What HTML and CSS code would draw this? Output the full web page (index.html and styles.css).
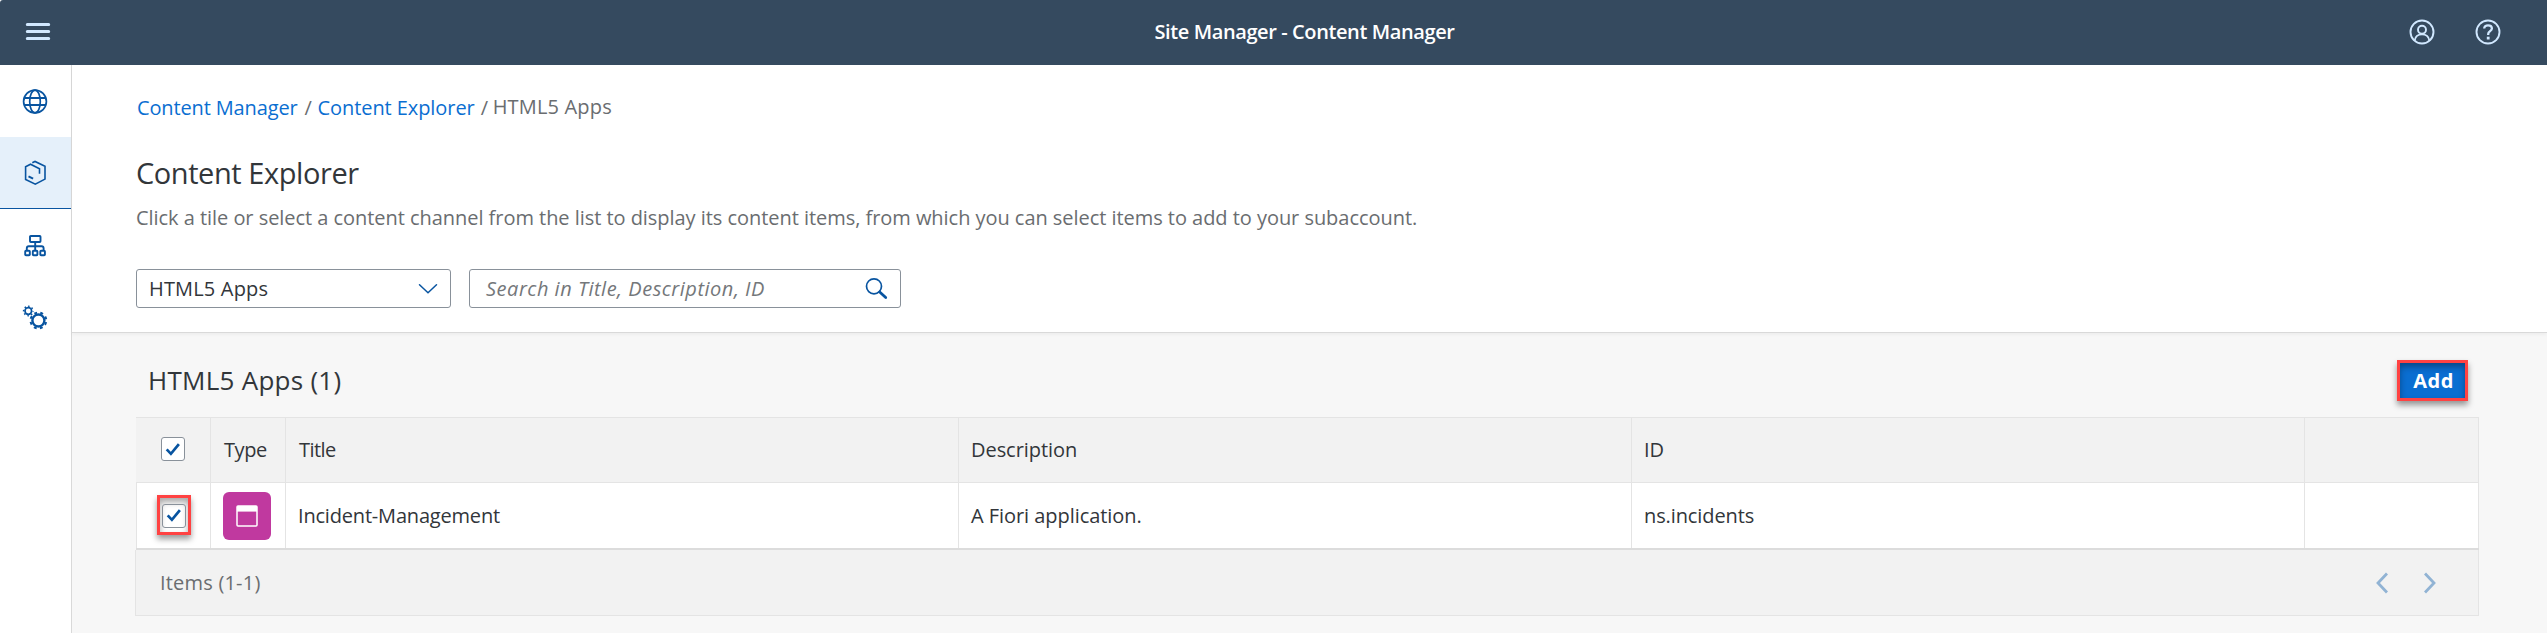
FILE: index.html
```
<!DOCTYPE html>
<html lang="en">
<head>
<meta charset="utf-8">
<title>Site Manager - Content Manager</title>
<link rel="stylesheet" href="styles.css">
</head>
<body>
<header class="shell">
  <button class="shell-btn" aria-label="Menu">
    <svg width="26" height="18" viewBox="0 0 26 18"><path d="M2.300 1.500h21.400M2.300 8.500h21.400M2.300 15.500h21.400" stroke="#d1e8ff" stroke-width="3" stroke-linecap="round"/></svg>
  </button>
  <div class="shell-title">Site Manager - Content Manager</div>
  <div class="shell-actions">
    <svg width="26" height="26" viewBox="0 0 26 26" fill="none" stroke="#d1e8ff" stroke-width="1.900"><circle cx="13" cy="13" r="11.500"/><circle cx="13" cy="10.700" r="4"/><path d="M5.600 21.600c.7-4 3.600-6.200 7.400-6.200s6.700 2.200 7.400 6.200"/></svg>
    <svg width="26" height="26" viewBox="0 0 26 26" fill="none" stroke="#d1e8ff" stroke-width="1.900"><circle cx="13" cy="13" r="11.500"/><path stroke-width="2.300" d="M9.200 9.600c0-2.100 1.600-3.300 3.800-3.300s3.900 1.200 3.900 3.200c0 2.600-3.700 2.700-3.700 5.500v.9"/><path stroke-width="2.800" d="M13.200 17.700v2.800"/></svg>
  </div>
</header>
<div class="body">
  <nav class="side">
    <a class="side-item"><svg width="26" height="26" viewBox="0 0 26 26" fill="none" stroke="#0854a0" stroke-width="1.700"><circle cx="13" cy="13.500" r="11.400"/><ellipse cx="13" cy="13.500" rx="5.300" ry="11.400"/><path d="M2 10h22M2 17h22" stroke-width="2"/></svg></a>
    <a class="side-item active"><svg width="26" height="26" viewBox="0 0 26 26" fill="none" stroke="#0854a0" stroke-width="1.600"><path d="M10.300 2.700l2.700-1.200 10 4.700v12.900l-9.700 5.100-9.700-4.800V6.800l4.900-2.600 9 4.600v5"/><path d="M6.500 16.400l4.600 2.300" stroke-width="2"/></svg></a>
    <a class="side-item"><svg width="26" height="26" viewBox="0 0 26 26" fill="none" stroke="#0854a0" stroke-width="1.900"><rect x="8" y="4" width="10.500" height="6" rx=".8"/><rect x="3.200" y="18.700" width="4.600" height="4.600" rx=".8"/><rect x="10.800" y="18.700" width="4.600" height="4.600" rx=".8"/><rect x="18.300" y="18.700" width="4.600" height="4.600" rx=".8"/><path d="M13.200 10v8.500M4.800 18.500v-2.200q0-2 2-2h12.800q2 0 2 2v2.200"/></svg></a>
    <a class="side-item"><svg width="26" height="26" viewBox="0 0 26 26" fill="none" stroke="#0854a0"><circle cx="6.300" cy="7" r="3.300" stroke-width="1.700"/><circle cx="6.300" cy="7" r="4.700" stroke-width="1.500" stroke-dasharray="1.500 2.190" stroke-dashoffset=".75"/><circle cx="16.400" cy="16.500" r="6" stroke-width="2.400"/><circle cx="16.400" cy="16.500" r="7.900" stroke-width="2" stroke-dasharray="2.900 3.304" stroke-dashoffset="-1.700"/></svg></a>
  </nav>
  <main class="main">
    <section class="page-head">
      <div class="crumbs"><a class="crumb-manager">Content Manager</a><span class="sep">/</span><a class="crumb-explorer">Content Explorer</a><span class="sep sep-last">/</span><span class="crumb-current">HTML5 Apps</span></div>
      <h1 class="title">Content Explorer</h1>
      <p class="subtitle">Click a tile or select a content channel from the list to display its content items, from which you can select items to add to your subaccount.</p>
      <div class="filters">
        <div class="select"><span class="select-text">HTML5 Apps</span><svg width="20" height="12" viewBox="0 0 20 12"><path d="M1.500 1.700l8.500 8 8.500-8" fill="none" stroke="#0854a0" stroke-width="1.500" stroke-linecap="round"/></svg></div>
        <div class="search"><span class="search-text">Search in Title, Description, ID</span><svg width="23" height="23" viewBox="0 0 23 23" fill="none" stroke="#0854a0"><circle cx="9" cy="9.300" r="7.500" stroke-width="1.700"/><path d="M14.700 15l6 5.500" stroke-width="2.800" stroke-linecap="round"/></svg></div>
      </div>
    </section>
    <section class="list">
      <div class="toolbar">
        <h2 class="list-title">HTML5 Apps (1)</h2>
        <button class="add mark">Add</button>
      </div>
      <div class="table">
        <div class="row head">
          <div class="cell pick"><span class="check"><svg width="16" height="15" viewBox="0 0 16 15"><path d="M1.700 7.300l4.200 4.500 8-9.700" fill="none" stroke="#0854a0" stroke-width="2.700"/></svg></span></div>
          <div class="cell type type-head">Type</div>
          <div class="cell name">Title</div>
          <div class="cell">Description</div>
          <div class="cell">ID</div>
          <div class="cell"></div>
        </div>
        <div class="row item">
          <div class="cell pick"><span class="mark check-mark"><span class="check"><svg width="16" height="15" viewBox="0 0 16 15"><path d="M1.700 7.300l4.200 4.500 8-9.700" fill="none" stroke="#0854a0" stroke-width="2.700"/></svg></span></span></div>
          <div class="cell type"><span class="tile"><svg width="22" height="22" viewBox="0 0 22 22"><rect x="1" y="1" width="20" height="20" rx="1" fill="none" stroke="#fff" stroke-width="1.500"/><path d="M1 1h20v5.600H1z" fill="#fff"/></svg></span></div>
          <div class="cell incident">Incident-Management</div>
          <div class="cell">A Fiori application.</div>
          <div class="cell ns">ns.incidents</div>
          <div class="cell"></div>
        </div>
      </div>
      <footer class="pager">
        <span>Items (1-1)</span>
        <div class="arrows">
          <svg width="12" height="22" viewBox="0 0 12 22"><path d="M11 1.500L2 11l9 9.500" fill="none" stroke="#91b3d4" stroke-width="2.800"/></svg>
          <svg width="12" height="22" viewBox="0 0 12 22"><path d="M1 1.500L10 11l-9 9.500" fill="none" stroke="#91b3d4" stroke-width="2.800"/></svg>
        </div>
      </footer>
    </section>
  </main>
</div>
</body>
</html>
```
FILE: styles.css
```
* { box-sizing: border-box; }
body {
  margin: 0;
  height: 633px;
  overflow: hidden;
  background: #fff;
  color: #32363a;
  font: 20px/28px "Open Sans", "Noto Sans", sans-serif;
  letter-spacing: -0.05px;
}
button { font: inherit; border: 0; padding: 0; background: none; }
svg { display: block; flex: none; }

.shell {
  height: 65px;
  display: grid;
  grid-template-columns: 1fr auto 1fr;
  align-items: center;
  background: #354a5f;
  border-top-left-radius: 3px;
  padding: 0 46px 1px 25px;
}
.shell-btn { justify-self: start; }
.shell-title {
  color: #fff;
  font-weight: 600;
  letter-spacing: -0.4px;
  padding: 0 0 1px 83px;
}
.shell-actions { justify-self: end; display: flex; gap: 40px; }

.body { display: flex; height: 568px; }
.side { width: 72px; border-right: 1px solid #d9d9d9; }
.side-item { height: 72px; display: flex; align-items: center; padding-left: 22px; }
.active { background: #e5f0fa; border-bottom: 1px solid #0854a0; }

.main { flex: 1; background: #f7f7f7; }
.page-head {
  height: 268px;
  padding: 29px 64px 0;
  background: #fff;
  border-bottom: 1px solid #d9d9d9;
  box-shadow: 0 2px 3px rgba(0, 0, 0, .04);
}
.crumbs { display: flex; color: #6a6d70; }
.crumbs a { color: #0a6ed1; }
.crumb-manager { padding-left: 1px; letter-spacing: -0.137px; }
.crumb-explorer { letter-spacing: -0.076px; }
.crumb-current { letter-spacing: .17px; margin-top: -1px; }
.sep { width: 20px; padding-left: 7px; }
.sep-last { padding-left: 6px; width: 18px; }
.title {
  margin: 31px 0 0;
  font-size: 29px;
  line-height: 40px;
  font-weight: 400;
  letter-spacing: -0.43px;
}
.subtitle { margin: 11px 0 0; color: #6a6d70; letter-spacing: -0.043px; }
.filters { display: flex; gap: 18px; margin-top: 37px; }
.select, .search {
  height: 39px;
  display: flex;
  align-items: center;
  justify-content: space-between;
  border: 1px solid #89919a;
  border-radius: 3px;
}
.select { width: 315px; padding: 0 12px; letter-spacing: .17px; }
.search { width: 432px; padding: 0 12px 0 16px; }
.search-text { font-style: italic; color: #74777a; letter-spacing: .513px; }

.list { padding: 0 68px 0 63px; }
.toolbar {
  height: 84px;
  padding: 27px 11px 0 13px;
  display: flex;
  justify-content: space-between;
  align-items: flex-start;
}
.list-title { margin: 2px 0 0; font-size: 26px; line-height: 36px; font-weight: 400; letter-spacing: .269px; }
.mark {
  border: 3px solid #ff4242;
  box-shadow: 0 4px 6px rgba(0, 0, 0, .4), inset 0 4px 6px rgba(0, 0, 0, .35);
}
.add {
  width: 71px;
  height: 41px;
  padding: 0 0 0 2px;
  background: #0a6ed1;
  color: #fff;
  font-weight: 700;
  letter-spacing: .5px;
}

.table { margin-left: 1px; border-top: 1px solid #e4e4e4; }
.row { display: grid; grid-template-columns: 75px 75px 1fr 1fr 1fr 174px; }
.cell {
  display: flex;
  align-items: center;
  padding-left: 12px;
  border-right: 1px solid #e4e4e4;
}
.head { height: 65px; background: #f2f2f2; border-bottom: 1px solid #e4e4e4; }
.item { height: 67px; background: #fff; border-bottom: 2px solid #dcdcdc; }
.pick { padding: 0 0 2px 25px; }
.item .pick { border-left: 1px solid #e4e4e4; padding-left: 20px; }
.type-head { padding-left: 13px; letter-spacing: -0.42px; }
.name { padding-left: 13px; letter-spacing: -0.56px; }
.incident { letter-spacing: -0.187px; }
.ns { letter-spacing: -0.1px; }
.check {
  width: 24px;
  height: 24px;
  display: flex;
  align-items: center;
  justify-content: center;
  background: #fff;
  border: 1px solid #89919a;
  border-radius: 3px;
}
.check-mark {
  width: 34px;
  height: 40px;
  display: flex;
  align-items: center;
  justify-content: center;
  padding-top: 2px;
}
.check-mark .check { background: none; }
.tile {
  width: 48px;
  height: 48px;
  display: flex;
  align-items: center;
  justify-content: center;
  border-radius: 6px;
  background: #c0399f;
}
.pager {
  height: 66px;
  display: flex;
  align-items: center;
  justify-content: space-between;
  padding: 0 42px 0 24px;
  background: #f2f2f2;
  border: 1px solid #e4e4e4;
  border-top: 0;
  color: #6a6d70;
  letter-spacing: .2px;
}
.arrows { display: flex; gap: 36px; }
```
